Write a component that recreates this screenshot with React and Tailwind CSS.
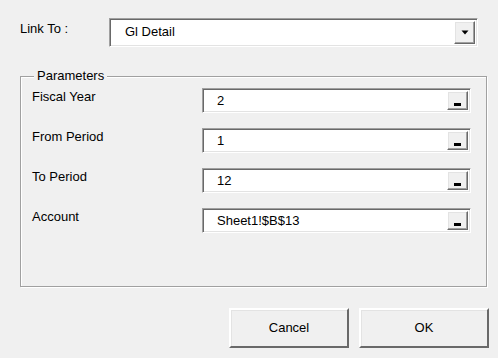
function Sunken({ className, children }) {
  return (
    <div
      className={`flex border border-t-[#a0a0a0] border-l-[#a0a0a0] border-b-white border-r-white bg-white shadow-[inset_1px_1px_0_#696969,inset_-1px_-1px_0_#e3e3e3] ${className}`}
    >
      {children}
    </div>
  );
}

function PickButton({ children, className }) {
  return (
    <div
      className={`flex items-center justify-center border border-t-white border-l-white border-b-[#696969] border-r-[#696969] bg-[#f0f0f0] shadow-[inset_-1px_-1px_0_#a0a0a0,inset_1px_1px_0_#e3e3e3] ${className}`}
    >
      {children}
    </div>
  );
}

function ParamRow({ label, value }) {
  return (
    <div className="flex h-[25px]">
      <span className="w-[170px] pt-[1px] leading-[16px]">{label}</span>
      <Sunken className="h-[25px] w-[269px] items-stretch p-[2px]">
        <span className="flex-1 pl-[12px] pt-[2px] leading-[16px]">{value}</span>
        <PickButton className="w-[21px] items-end pb-[3px]">
          <span className="block h-[3px] w-[7px] bg-black" />
        </PickButton>
      </Sunken>
    </div>
  );
}

function DialogButton({ children, className }) {
  return (
    <button
      className={`h-[40px] border-2 border-t-white border-l-white border-b-[#696969] border-r-[#696969] bg-[#f0f0f0] shadow-[inset_1px_1px_0_#e3e3e3] ${className}`}
    >
      {children}
    </button>
  );
}

export default function App() {
  const params = [
    ["Fiscal Year", "2"],
    ["From Period", "1"],
    ["To Period", "12"],
    ["Account", "Sheet1!$B$13"],
  ];

  return (
    <div className="h-[358px] w-[498px] overflow-hidden bg-[#f0f0f0] pt-[18px] font-['Liberation_Sans',Arial,sans-serif] text-[13px] text-black">
      <div className="flex pl-[20px]">
        <span className="w-[89px] pt-[3px] leading-[16px]">Link To :</span>
        <Sunken className="h-[29px] w-[369px] items-stretch p-[2px]">
          <span className="flex-1 pl-[13px] pt-[3px] leading-[16px]">Gl Detail</span>
          <PickButton className="w-[21px]">
            <svg width="8" height="5" viewBox="0 0 8 5">
              <path d="M0.5 0.5h7L4 4.5z" fill="#000" />
            </svg>
          </PickButton>
        </Sunken>
      </div>

      <div className="relative ml-[20px] mt-[29px] h-[211px] w-[467px] border border-[#a0a0a0] shadow-[1px_1px_0_#fff,inset_1px_1px_0_#fff]">
        <span className="absolute -top-[9px] left-[13px] bg-[#f0f0f0] px-[3px] leading-[16px]">
          Parameters
        </span>
        <div className="flex flex-col gap-[15px] pl-[11px] pt-[11px]">
          {params.map(([label, value]) => (
            <ParamRow key={label} label={label} value={value} />
          ))}
        </div>
      </div>

      <div className="mt-[21px] flex gap-[10px] pl-[229px]">
        <DialogButton className="w-[120px]">Cancel</DialogButton>
        <DialogButton className="w-[130px]">OK</DialogButton>
      </div>
    </div>
  );
}
